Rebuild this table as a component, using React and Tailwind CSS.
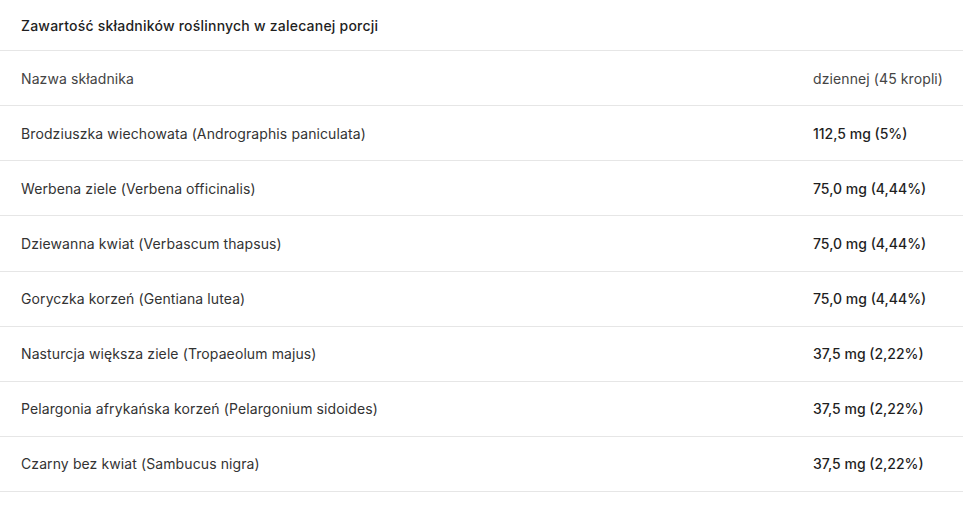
export default function App() {
  const rows = [
    ["Brodziuszka wiechowata (Andrographis paniculata)", "112,5 mg (5%)"],
    ["Werbena ziele (Verbena officinalis)", "75,0 mg (4,44%)"],
    ["Dziewanna kwiat (Verbascum thapsus)", "75,0 mg (4,44%)"],
    ["Goryczka korzeń (Gentiana lutea)", "75,0 mg (4,44%)"],
    ["Nasturcja większa ziele (Tropaeolum majus)", "37,5 mg (2,22%)"],
    ["Pelargonia afrykańska korzeń (Pelargonium sidoides)", "37,5 mg (2,22%)"],
    ["Czarny bez kwiat (Sambucus nigra)", "37,5 mg (2,22%)"],
  ];
  return (
    <div className="w-[963px] h-[513px] bg-white overflow-hidden" style={{ fontFamily: "Inter, 'Noto Sans', sans-serif" }}>
      <div className="h-[51px] flex items-center px-[21px] border-b border-[#e6e6e6] text-[14px] font-medium tracking-[0.22px] text-[#1f1f1f]">
        Zawartość składników roślinnych w zalecanej porcji
      </div>
      <div className="grid grid-cols-[1fr_170px] h-[55.125px] items-center border-b border-[#e6e6e6] text-[14px] text-[#444] tracking-[0.1px]">
        <div className="px-[21px]">Nazwa składnika</div>
        <div className="pl-[20px] whitespace-nowrap">dziennej (45 kropli)</div>
      </div>
      {rows.map(([n, v]) => (
        <div key={n} className="grid grid-cols-[1fr_170px] h-[55.125px] items-center border-b border-[#e6e6e6] text-[14px]">
          <div className="px-[21px] text-[#333] tracking-[0.1px]">{n}</div>
          <div className="pl-[20px] font-medium text-[#1f1f1f] whitespace-nowrap">{v}</div>
        </div>
      ))}
    </div>
  );
}
